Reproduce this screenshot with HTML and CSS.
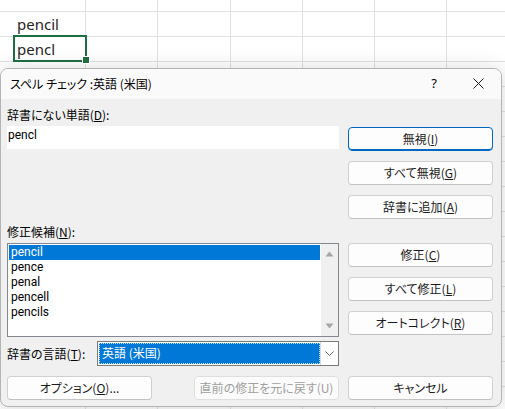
FILE: index.html
```html
<!DOCTYPE html>
<html lang="ja">
<head>
<meta charset="utf-8">
<title>スペル チェック</title>
<link rel="stylesheet" href="styles.css">
</head>
<body>
<div class="sheet">
  <div class="col col-a"></div>
  <div class="col col-b">
    <div class="cell">pencil</div>
    <div class="cell selected">pencl</div>
  </div>
  <div class="col"></div>
  <div class="col"></div>
  <div class="col"></div>
  <div class="col"></div>
  <div class="col"></div>
  <div class="col"></div>
</div>

<div class="dialog">
  <div class="titlebar">
    <span class="title">スペル チェック :英語 (米国)</span>
    <span class="tb-help">?</span>
    <span class="tb-close"><svg width="11" height="11" viewBox="0 0 11 11"><path d="M0.5 0.5 L10.5 10.5 M10.5 0.5 L0.5 10.5" stroke="#1a1a1a" stroke-width="1" fill="none"/></svg></span>
  </div>
  <div class="body">
    <div class="row row-a">
      <div class="left">
        <div class="label">辞書にない単語(<u>D</u>):</div>
        <div class="textbox">pencl</div>
      </div>
      <div class="btns">
        <div class="btn primary">無視(<u>I</u>)</div>
        <div class="btn">すべて無視(<u>G</u>)</div>
        <div class="btn">辞書に追加(<u>A</u>)</div>
      </div>
    </div>
    <div class="row row-b">
      <div class="left">
        <div class="label">修正候補(<u>N</u>):</div>
        <div class="listbox">
          <div class="list">
            <div class="item sel">pencil</div>
            <div class="item">pence</div>
            <div class="item">penal</div>
            <div class="item">pencell</div>
            <div class="item">pencils</div>
          </div>
          <div class="scrollbar">
            <svg width="9" height="6" viewBox="0 0 9 6"><path d="M4.5 0.5 L8.5 5.5 L0.5 5.5 Z" fill="#a6a6a6"/></svg>
            <svg width="9" height="6" viewBox="0 0 9 6"><path d="M0.5 0.5 L8.5 0.5 L4.5 5.5 Z" fill="#a6a6a6"/></svg>
          </div>
        </div>
      </div>
      <div class="btns">
        <div class="btn">修正(<u>C</u>)</div>
        <div class="btn">すべて修正(<u>L</u>)</div>
        <div class="btn">オートコレクト(<u>R</u>)</div>
      </div>
    </div>
    <div class="row row-c">
      <div class="lang">
        <div class="label lang-label">辞書の言語(<u>T</u>):</div>
        <div class="combo">
          <div class="combo-value">英語 (米国)</div>
          <div class="combo-arrow"><svg width="9" height="5" viewBox="0 0 9 5"><path d="M0.5 0.5 L4.5 4.5 L8.5 0.5" stroke="#606060" stroke-width="1" fill="none"/></svg></div>
        </div>
      </div>
    </div>
    <div class="row row-d">
      <div class="bottom-left">
        <div class="btn">オプション(<u>O</u>)...</div>
        <div class="btn disabled">直前の修正を元に戻す(U)</div>
      </div>
      <div class="btn">キャンセル</div>
    </div>
  </div>
</div>
</body>
</html>
```
FILE: styles.css
```css
* { box-sizing: border-box; }
html, body { margin: 0; padding: 0; }
body {
  width: 505px;
  height: 409px;
  overflow: hidden;
  position: relative;
  background: #fff;
  font-family: "Noto Sans CJK JP", sans-serif;
  color: #000;
}

/* spreadsheet */
.sheet {
  display: grid;
  grid-template-columns: 14px repeat(7, 72.2px);
  height: 409px;
  background-image: repeating-linear-gradient(to bottom,
    transparent 0, transparent 11px,
    #e1e1e1 11px, #e1e1e1 12px,
    transparent 12px, transparent 25px);
}
.col { border-right: 1px solid #e1e1e1; }
.col-a { border-right: none; }
.col-b {
  display: flex;
  flex-direction: column;
  padding-top: 12px;
}
.cell {
  height: 25px;
  padding: 0 3px;
  font-family: "Noto Sans", sans-serif;
  font-size: 15px;
  line-height: 24px;
  color: #262626;
  position: relative;
}
.cell.selected::after {
  content: "";
  position: absolute;
  left: -1px;
  top: -2px;
  right: -2px;
  bottom: 0;
  border: 2px solid #1e6e42;
}
.cell.selected::before {
  content: "";
  position: absolute;
  right: -4px;
  bottom: -1px;
  width: 6px;
  height: 6px;
  background: #1e6e42;
  box-shadow: 0 0 0 1px #fff;
  z-index: 1;
}

/* dialog */
.dialog {
  position: absolute;
  left: 0;
  top: 68px;
  width: 502px;
  border: 1px solid #b4b4b4;
  border-radius: 8px;
  background: #f0f0f0;
  box-shadow: 0 2px 22px rgba(0, 0, 0, 0.16);
  overflow: hidden;
  font-size: 12px;
  font-feature-settings: "palt";
}
.titlebar {
  height: 30px;
  background: #fafafa;
  display: flex;
  align-items: center;
  padding-left: 9px;
  padding-bottom: 2px;
}
.title { flex: 1; font-size: 12px; }
.tb-help {
  width: 44px;
  text-align: center;
  font-size: 13px;
  font-family: "Noto Sans", sans-serif;
}
.tb-close {
  width: 45px;
  display: flex;
  justify-content: center;
  align-items: center;
}

.body { padding: 8px 8px 6px 6px; }
.row {
  display: grid;
  grid-template-columns: 332px 145px;
  column-gap: 9px;
}
.row-b { margin-top: 5px; }
.row-c { margin-top: 4px; }
.row-d { margin-top: 10px; }

.label { line-height: 16px; height: 16px; }
u { text-underline-offset: 1px; }

.textbox {
  margin-top: 3px;
  height: 23px;
  background: #fff;
  padding: 2px 1px;
  font-family: Roboto, sans-serif;
  font-size: 12px;
  line-height: 14px;
}

.btns {
  display: flex;
  flex-direction: column;
  gap: 10px;
}
.row-a .btns { padding-top: 20px; }
.row-b .btns { padding-top: 19px; }

.btn {
  height: 24px;
  border: 1px solid #d0d0d0;
  border-bottom-color: #c2c2c2;
  border-radius: 4px;
  background: #fdfdfd;
  display: flex;
  align-items: center;
  justify-content: center;
  font-size: 12px;
  line-height: 16px;
  color: #1b1b1b;
  padding-bottom: 1px;
}
.btn.primary {
  border-color: #0067c0;
  box-shadow: inset 0 -1px 0 #0067c0;
}
.btn.disabled {
  color: #a0a0a0;
  border-color: #dedede;
  background: #fbfbfb;
}

/* list */
.listbox {
  margin-top: 3px;
  height: 94px;
  border: 1px solid #828790;
  background: #fff;
  display: flex;
}
.list {
  flex: 1;
  padding: 1px;
}
.item {
  height: 15px;
  line-height: 15px;
  padding-left: 2px;
  font-family: Roboto, sans-serif;
  font-size: 12px;
  color: #000;
}
.item.sel { background: #0078d7; color: #fff; }
.scrollbar {
  width: 17px;
  background: #f0f0f0;
  display: flex;
  flex-direction: column;
  justify-content: space-between;
  align-items: center;
  padding: 7px 0 7px 0;
}

/* language */
.lang {
  display: flex;
  align-items: center;
  height: 25px;
}
.lang-label { width: 90px; }
.combo {
  flex: 1;
  height: 25px;
  border: 1px solid #7a7a7a;
  background: #fff;
  display: flex;
}
.combo-value {
  flex: 1;
  margin: 1px 0 1px 1px;
  background: #0078d7;
  color: #fff;
  border: 1px dotted rgba(255, 255, 255, 0.75);
  padding-left: 2px;
  line-height: 18px;
  font-size: 12px;
}
.combo-arrow {
  width: 18px;
  border-left: 1px solid #d9d9d9;
  display: flex;
  align-items: center;
  justify-content: center;
}

.bottom-left {
  display: flex;
  justify-content: space-between;
}
.bottom-left .btn { width: 145px; }
```
